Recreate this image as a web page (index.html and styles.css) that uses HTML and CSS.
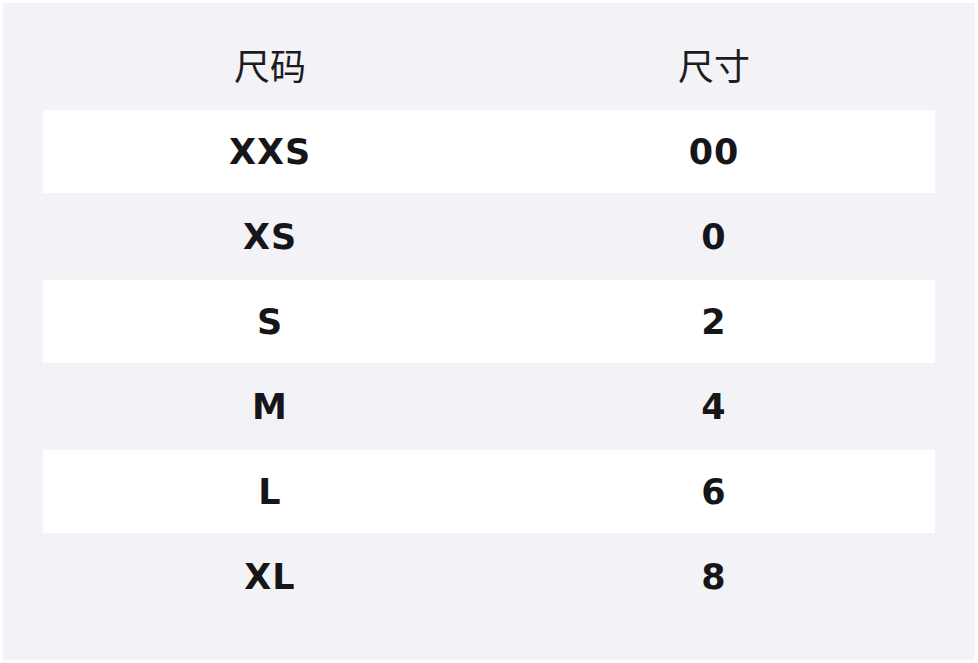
FILE: index.html
```html
<!DOCTYPE html>
<html lang="zh">
<head>
<meta charset="utf-8">
<link rel="stylesheet" href="styles.css">
</head>
<body>
<div class="panel">
  <table class="sizes">
    <thead>
      <tr><th class="c1">尺码</th><th class="c2">尺寸</th></tr>
    </thead>
    <tbody>
      <tr class="on"><td>XXS</td><td>00</td></tr>
      <tr><td>XS</td><td>0</td></tr>
      <tr class="on"><td>S</td><td>2</td></tr>
      <tr><td>M</td><td>4</td></tr>
      <tr class="on"><td>L</td><td>6</td></tr>
      <tr><td>XL</td><td>8</td></tr>
    </tbody>
  </table>
</div>
</body>
</html>
```
FILE: styles.css
```css
html, body {
  margin: 0;
  background: #ffffff;
}
body {
  padding: 3px;
  font-family: "DejaVu Sans", "Noto Sans CJK SC", sans-serif;
  color: #16161a;
}
.panel {
  width: 972px;
  height: 657px;
  box-sizing: border-box;
  background: #f2f2f7;
  padding: 20px 40px 40px;
}
.sizes {
  width: 892px;
  border-collapse: separate;
  border-spacing: 0 2px;
  table-layout: fixed;
}
.sizes th, .sizes td {
  height: 83px;
  padding: 0;
  text-align: center;
  vertical-align: middle;
}
.sizes th {
  font-family: "Noto Sans CJK SC", sans-serif;
  font-weight: 400;
  font-size: 36px;
  color: #1c1c1e;
  padding-bottom: 6px;
  box-sizing: border-box;
}
.sizes .c1 { width: 450px; }
.sizes .c2 { width: 442px; }
.sizes th:first-child,
.sizes td:first-child {
  padding-left: 4px;
}
.sizes td {
  font-weight: 700;
  font-size: 35px;
  letter-spacing: 1px;
}
.sizes tr.on td {
  background: #ffffff;
}
```
